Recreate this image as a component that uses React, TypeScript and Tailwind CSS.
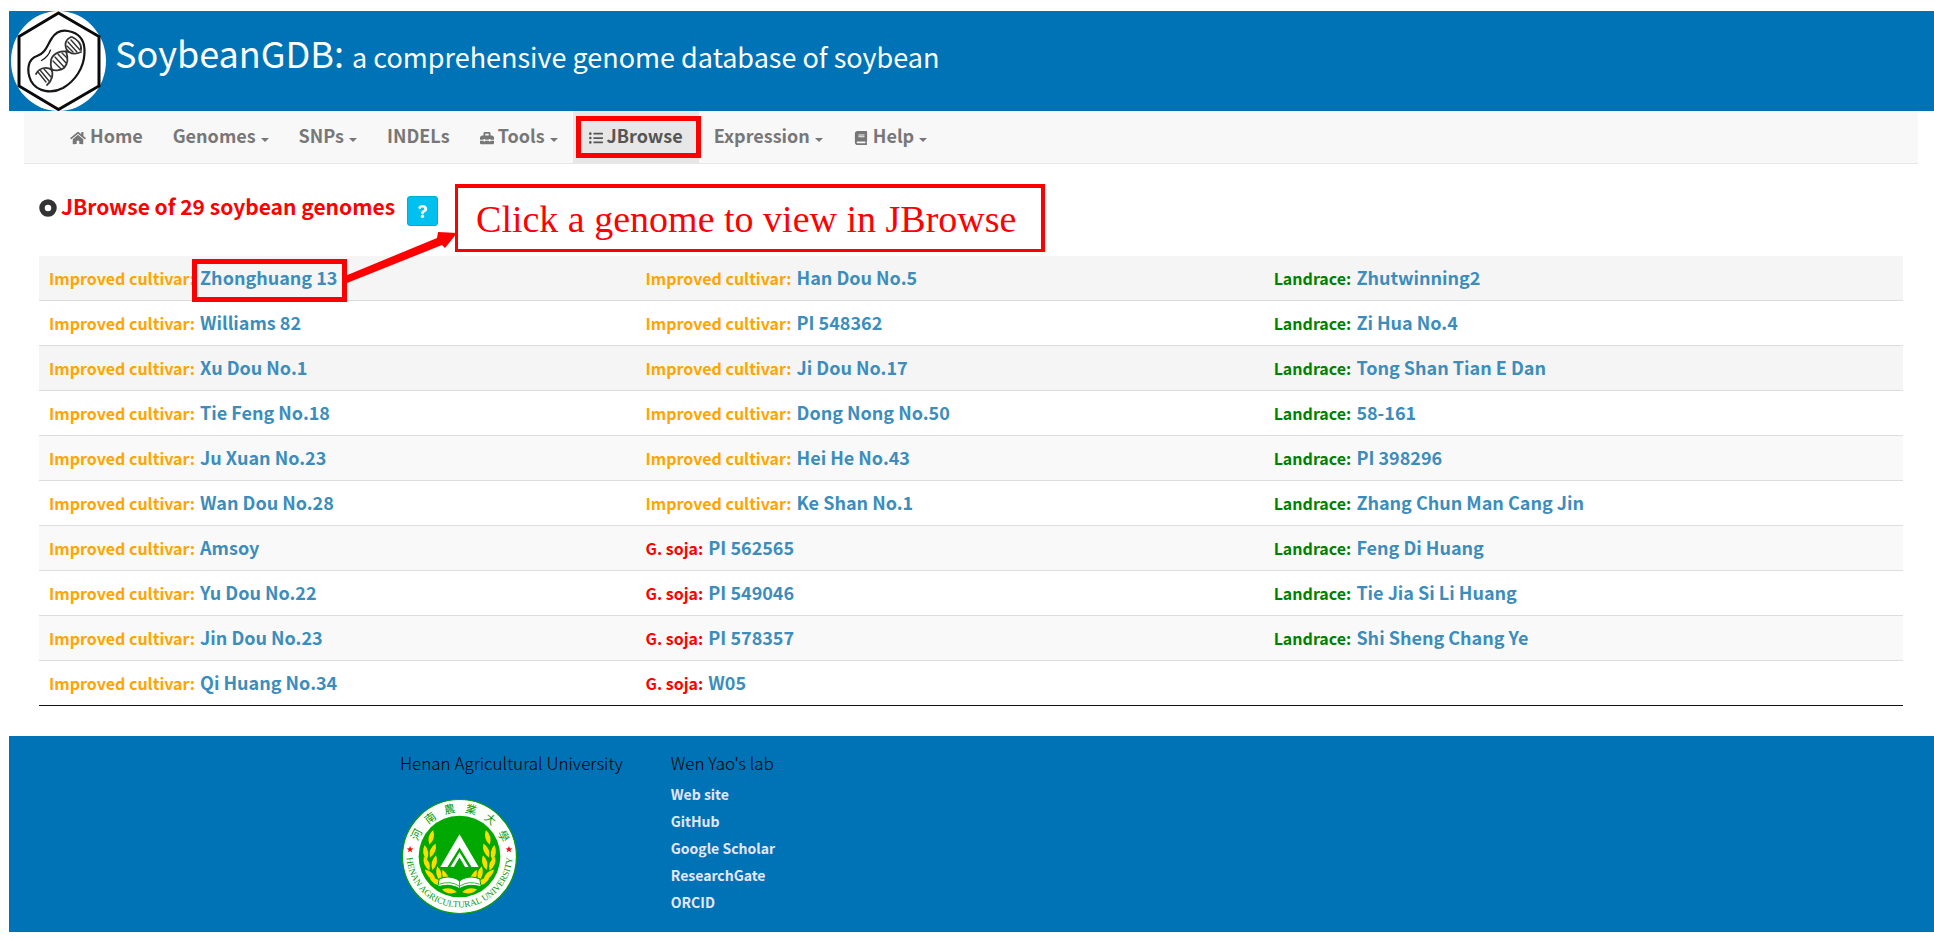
import React from "react";
import { FaHome, FaToolbox, FaListUl, FaBook, FaQuestion } from "react-icons/fa";

type Kind = "Improved cultivar" | "G. soja" | "Landrace";
type Genome = { kind: Kind; name: string };

const make = (kind: Kind, names: string[]): Genome[] => names.map((name) => ({ kind, name }));

const columns: Genome[][] = [
  make("Improved cultivar", [
    "Zhonghuang 13", "Williams 82", "Xu Dou No.1", "Tie Feng No.18", "Ju Xuan No.23",
    "Wan Dou No.28", "Amsoy", "Yu Dou No.22", "Jin Dou No.23", "Qi Huang No.34",
  ]),
  [
    ...make("Improved cultivar", [
      "Han Dou No.5", "PI 548362", "Ji Dou No.17", "Dong Nong No.50", "Hei He No.43", "Ke Shan No.1",
    ]),
    ...make("G. soja", ["PI 562565", "PI 549046", "PI 578357", "W05"]),
  ],
  make("Landrace", [
    "Zhutwinning2", "Zi Hua No.4", "Tong Shan Tian E Dan", "58-161", "PI 398296",
    "Zhang Chun Man Cang Jin", "Feng Di Huang", "Tie Jia Si Li Huang", "Shi Sheng Chang Ye",
  ]),
];

const kindColor: Record<Kind, string> = {
  "Improved cultivar": "text-[#ffa500]",
  "G. soja": "text-[#ff0000]",
  Landrace: "text-[#008000]",
};

const rowIndexes = Array.from({ length: 10 }, (_, i) => i);

function rowShade(r: number) {
  if (r === 0 || r === 2) return "bg-[#f5f5f5]";
  return r % 2 === 0 ? "bg-[#f9f9f9]" : "bg-white";
}

function SoybeanLogo() {
  return (
    <svg viewBox="0 0 100 100" className="h-[100px] w-[100px] shrink-0" role="img" aria-label="SoybeanGDB logo">
      <ellipse cx="49.500" cy="50" rx="47.500" ry="50" fill="#fff" />
      <path d="M49.500 2 L90 25.500 V75 L49.500 98.500 L10 75 V25.500 Z" fill="none" stroke="#0a0a0a" strokeWidth="3" />
      <g fill="none" stroke="#161616" strokeLinecap="round">
        <path
          strokeWidth="2.200"
          d="M43 27 C48 19 56 18.500 63 21 C72 24 76 32 75.500 42 C75 57 66 70 54 77 C43 83 28 81 22 70 C17 59 19 48 28 45 C37 42 38 34 43 27 Z"
        />
        <path strokeWidth="1.200" d="M41.500 39 C40 44 37 47 32.500 49.500" />
        <g strokeWidth="1.800" stroke="#333">
          <path d="M62 26 C55 29 55 37 60 41 C63 43 68 43 72 41" />
          <path d="M63 26 C68 28 73 33 72 39" />
          <path d="M60 41 C52 39 44 42 42 49 C41 54 42 57 43 60" />
          <path d="M57 40 C59 46 60 52 55 57 C51 60 45 60 42 58" />
          <path d="M43 59 C37 55 30 57 27 63" />
          <path d="M42 57 C45 63 43 70 38 74" />
        </g>
        <path
          strokeWidth="1.400"
          stroke="#333"
          d="M59 31 L68 41 M62 29 L71 39 M58 35 L64 41 M44 50 L52 58 M46 46 L55 56 M49 43 L57 52 M53 42 L58 47 M31 59 L40 70 M35 58 L42 66 M29 61 L37 71"
        />
      </g>
    </svg>
  );
}

const leaves = [
  [-28, -19, 14], [-33.5, -4, -8], [-26.500, -6, 22], [-32.500, 7, -22], [-25, 6, 14],
  [-29, 18, -46], [-20.500, 17, -12], [-23, 25, -62], [-14, 20, -24], [-10, 34, -80],
];

function UniversitySeal() {
  return (
    <svg viewBox="-58 -58 116 116" className="size-[117px]" role="img" aria-label="Henan Agricultural University seal">
      <defs>
        <path id="seal-bottom" d="M-52.500 -2 A52.500 52.500 0 0 0 52.500 -2" />
      </defs>
      <circle r="56.500" fill="#fff" stroke="#0a9d0a" strokeWidth="1.200" />
      <circle r="40.500" fill="#00a800" />
      <g fill="#079b07">
        {["河", "南", "農", "業", "大", "學"].map((c, i) => (
          <text
            key={c}
            textAnchor="middle"
            y="-44"
            className="font-['Noto_Sans_CJK_SC',sans-serif] text-[11px]"
            transform={`rotate(${-63 + i * 25.6})`}
          >
            {c}
          </text>
        ))}
        <text className="font-['Liberation_Serif',serif] text-[9px]">
          <textPath href="#seal-bottom" startOffset="50%" textAnchor="middle">
            HENAN AGRICULTURAL UNIVERSITY
          </textPath>
        </text>
      </g>
      {[-49, 49].map((x) => (
        <path
          key={x}
          d="M0 -3.400 L.9 -1.100 3.300 -1 1.400 .5 2.100 2.900 0 1.500 -2.100 2.900 -1.400 .5 -3.300 -1 -.9 -1.100 Z"
          fill="#f01010"
          transform={`translate(${x} -7)`}
        />
      ))}
      <g fill="#ffdc00">
        {[1, -1].map((side) => (
          <g key={side} transform={`scale(${side} 1)`}>
            {leaves.map(([x, y, r], i) => (
              <path key={i} d="M0 -7.500 Q5 0 0 7.500 Q-5 0 0 -7.500 Z" transform={`translate(${x} ${y}) rotate(${r})`} />
            ))}
          </g>
        ))}
      </g>
      <path d="M0 -22 L19 10.500 H-19 Z" fill="#fff" />
      <path d="M0 -9 L-12 10.500 H-9 L0 -4.500 L9 10.500 H12 Z M0 1 L-5.500 10.500 H5.500 Z" fill="#00a800" />
      <path d="M-20 22 Q-9 18 0 24 Q9 18 20 22 L21.500 30 Q9 26 0 32 Q-9 26 -21.500 30 Z" fill="#fff" stroke="#00a800" strokeWidth="1" />
      <path d="M-20 27.500 Q-9 23.500 0 29.500 Q9 23.500 20 27.500 M0 24 V32" fill="none" stroke="#00a800" strokeWidth=".8" />
    </svg>
  );
}

const labLinks = ["Web site", "GitHub", "Google Scholar", "ResearchGate", "ORCID"];

type NavLinkProps = { children: React.ReactNode; icon?: React.ReactNode; caret?: boolean; active?: boolean };

function NavLink({ children, icon, caret, active }: NavLinkProps) {
  return (
    <li className="flex">
      <a
        href="#"
        className={
          active
            ? "relative flex items-center gap-1 bg-[#e7e7e7] px-4 pb-[5px] text-[#555555]"
            : "flex items-center gap-1 px-[15px] pb-[5px] text-[#777777]"
        }
      >
        {icon}
        <span>{children}</span>
        {caret && (
          <svg viewBox="0 0 8 4" className="mt-2.5 ml-px h-1 w-2" aria-hidden="true">
            <path d="M0 0 H8 L4 4 Z" fill="currentColor" />
          </svg>
        )}
        {active && <span className="absolute top-[5px] right-[-2px] bottom-[5px] left-[3px] border-5 border-[#ff0000]" />}
      </a>
    </li>
  );
}

export default function App() {
  return (
    <div className="pt-[11px] pl-[9px] font-['Noto_Sans_CJK_SC',sans-serif] text-[#333333]">
      <header className="flex h-[100px] items-center bg-[#0073b7] pr-4 text-white">
        <SoybeanLogo />
        <h1 className="ml-[6px] pb-3.5 text-[36px] leading-[46px]">
          SoybeanGDB: <span className="text-[27px]">a comprehensive genome database of soybean</span>
        </h1>
      </header>

      <nav className="mr-4 ml-[15px] h-[53px] border-b border-[#e7e7e7] bg-[#f8f8f8] pl-[31px] text-[18px] leading-[20px] font-bold">
        <ul className="flex h-full">
          <NavLink icon={<FaHome className="mt-1.5 h-3.5 w-4" />}>Home</NavLink>
          <NavLink caret>Genomes</NavLink>
          <NavLink caret>SNPs</NavLink>
          <NavLink>INDELs</NavLink>
          <NavLink caret icon={<FaToolbox className="mt-1.5 size-3.5" />}>Tools</NavLink>
          <NavLink active icon={<FaListUl className="mt-1.5 size-3.5" />}>JBrowse</NavLink>
          <NavLink caret>Expression</NavLink>
          <NavLink caret icon={<FaBook className="mt-1.5 h-3.5 w-4" />}>Help</NavLink>
        </ul>
      </nav>

      <main className="mr-[31px] ml-[30px] pt-8">
        <div className="flex h-[60px] items-start">
          <svg viewBox="0 0 18 18" className="mt-[3px] size-[18px] shrink-0" aria-hidden="true">
            <circle cx="9" cy="9" r="6" fill="none" stroke="#333333" strokeWidth="5.500" />
          </svg>
          <h2 className="ml-1 text-[21px] leading-5 font-bold text-[#ff0000]">JBrowse of 29 soybean genomes</h2>
          <button
            aria-label="Help"
            className="ml-3 flex h-[30px] w-[31px] items-center justify-center rounded-[3px] border border-[#00acd6] bg-[#00c0ef] text-white"
          >
            <FaQuestion className="size-[13px]" />
          </button>
          <div className="relative">
            <p className="-mt-3 ml-[17px] h-[68px] border-[3px] border-t-4 border-r-4 border-[#ff0000] pr-[25px] pl-[18px] font-['Liberation_Serif',serif] text-[38px] leading-[62px] whitespace-nowrap text-[#ff0000]">
              Click a genome to view in JBrowse
            </p>
            <svg viewBox="0 0 112 56" className="absolute top-[34px] -left-[93px] h-[56px] w-[112px]" aria-hidden="true">
              <path d="M0 46 L92 8 L93 2 L112 3 L100 18 L97 15 L2 53 Z" fill="#ff0000" />
            </svg>
          </div>
        </div>

        <table className="w-full table-fixed border-separate border-spacing-0 text-left">
          <colgroup>
            <col className="w-[32%]" />
            <col className="w-[33.7%]" />
            <col className="w-[34.3%]" />
          </colgroup>
          <tbody>
            {rowIndexes.map((r) => (
              <tr key={r} className={`group h-[45px] ${rowShade(r)}`}>
                {columns.map((col, c) => {
                  const g = col[r];
                  return (
                    <td
                      key={c}
                      className="border-b border-[#dddddd] px-[10px] pb-0.5 text-[18px] leading-6 font-bold text-[#3c8dbc] group-last:border-[#111111]"
                    >
                      {g && (
                        <>
                          <span className={`mr-px text-[16px] ${kindColor[g.kind]}`}>{g.kind}:</span>{" "}
                          <a href="#" className="relative">
                            {g.name}
                            {g.name === "Zhonghuang 13" && (
                              <span className="absolute -top-[5px] -right-2.5 -bottom-3 -left-2 border-5 border-[#ff0000]" />
                            )}
                          </a>
                        </>
                      )}
                    </td>
                  );
                })}
              </tr>
            ))}
          </tbody>
        </table>
      </main>

      <footer className="mt-[30px] flex h-[196px] gap-12 bg-[#0073b7] pt-[15px] pl-[391px]">
        <section>
          <h3 className="text-[17px] leading-6 font-light text-black">Henan Agricultural University</h3>
          <div className="mt-[23px] ml-px">
            <UniversitySeal />
          </div>
        </section>
        <section>
          <h3 className="text-[17px] leading-6 font-light text-black">Wen Yao's lab</h3>
          <ul className="mt-[6px] text-[14px] leading-[27px] font-bold text-[#e6e6fa]">
            {labLinks.map((l) => (
              <li key={l}>
                <a href="#">{l}</a>
              </li>
            ))}
          </ul>
        </section>
      </footer>
    </div>
  );
}
